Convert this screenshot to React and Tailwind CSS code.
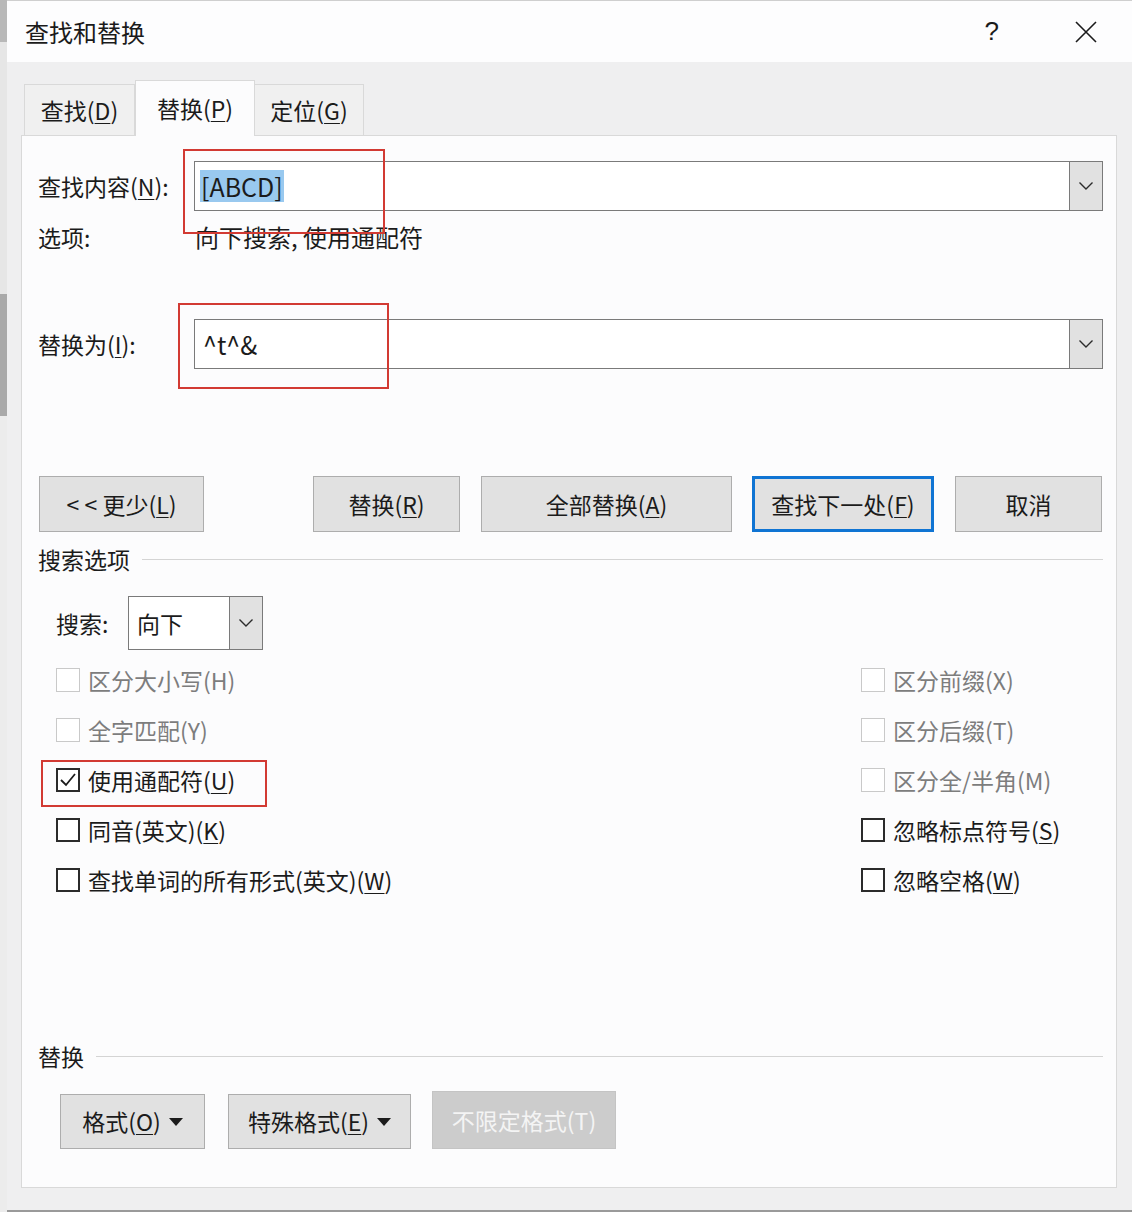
import { useState } from 'react';

function Chevron({ className = '' }) {
    return (
        <svg width="16" height="10" viewBox="0 0 16 10" className={className}>
            <polyline points="1.5,1.5 8,8 14.5,1.5" fill="none" stroke="#2b2b2b" strokeWidth="1.4" />
        </svg>
    );
}

function Caret() {
    return (
        <svg width="14" height="8" viewBox="0 0 14 8" className="ml-[8px]">
            <polygon points="0,0 14,0 7,8" fill="#1b1b1b" />
        </svg>
    );
}

function Key({ children }) {
    return <span className="underline underline-offset-[3px] decoration-1">{children}</span>;
}

function Checkbox({ checked, disabled, label }) {
    return (
        <div className="flex items-center h-[50px]">
            <div
                className={
                    disabled
                        ? 'w-[24px] h-[24px] border border-[#c9c9c9] bg-white'
                        : 'w-[24px] h-[24px] border-2 border-[#2b2b2b] bg-white flex items-center justify-center'
                }
            >
                {checked && (
                    <svg width="18" height="16" viewBox="0 0 18 16">
                        <polyline points="2,8 7,13 16,2" fill="none" stroke="#1b1b1b" strokeWidth="1.8" />
                    </svg>
                )}
            </div>
            <span className={disabled ? 'ml-[8px] text-[#7d7d7d]' : 'ml-[8px] text-[#1b1b1b]'}>{label}</span>
        </div>
    );
}

function Button({ w, children, focused }) {
    return (
        <div
            className={
                focused
                    ? `${w} h-[56px] bg-[#e1e1e1] border-[3px] border-[#0f74d3] flex items-center justify-center`
                    : `${w} h-[56px] bg-[#e1e1e1] border border-[#adadad] flex items-center justify-center`
            }
        >
            {children}
        </div>
    );
}

function ComboField({ value, selected }) {
    return (
        <div className="flex-1 h-[50px] flex border border-[#7a7a7a] bg-white">
            <div className="flex-1 flex items-center pl-[5px] text-[25px]">
                {selected ? (
                    <span className="bg-[#99c9ef] px-[1px] leading-[32px]">{value}</span>
                ) : (
                    <span className="leading-[32px] pl-[3px]">{value}</span>
                )}
            </div>
            <div className="w-[34px] -my-px -mr-px bg-[#e1e1e1] border border-[#7a7a7a] flex items-center justify-center">
                <Chevron />
            </div>
        </div>
    );
}

export default function App() {
    const [tab] = useState('replace');

    return (
        <div className="w-[1132px] h-[1212px] flex bg-[#efeff0] overflow-hidden font-['Noto_Sans_CJK_SC',sans-serif] text-[23px] text-[#1b1b1b]">
            {/* window behind the dialog */}
            <div className="w-[7px] flex flex-col">
                <div className="h-[42px] bg-[#b8b8b8]" />
                <div className="h-[252px] bg-[#e6e6e6]" />
                <div className="h-[122px] bg-[#a9a9a9]" />
                <div className="flex-1 bg-[#ececec]" />
            </div>

            <div className="flex-1 flex flex-col border-b-2 border-[#9a9a9a]">
                {/* title bar */}
                <div className="h-[62px] bg-[#fdfdfe] border-t border-[#cfcfcf] flex items-center pl-[18px]">
                    <span className="text-[24px]">查找和替换</span>
                    <span className="ml-auto mr-[76px] text-[26px] font-['Liberation_Sans',sans-serif]">?</span>
                    <svg width="22" height="22" viewBox="0 0 22 22" className="mr-[35px]">
                        <path d="M1 1 L21 21 M21 1 L1 21" stroke="#1b1b1b" strokeWidth="1.6" />
                    </svg>
                </div>

                {/* tabs */}
                <div className="flex items-end pl-[17px] pt-[18px]">
                    <div className="w-[111px] h-[51px] border border-b-0 border-[#d9d9d9] bg-[#f0f0f0] flex items-center justify-center">
                        查找(<Key>D</Key>)
                    </div>
                    <div className="w-[120px] h-[56px] border border-b-0 border-[#d9d9d9] bg-[#fcfcfd] flex items-center justify-center -mb-px relative z-10">
                        替换(<Key>P</Key>)
                    </div>
                    <div className="w-[109px] h-[51px] border border-b-0 border-l-0 border-[#d9d9d9] bg-[#f0f0f0] flex items-center justify-center">
                        定位(<Key>G</Key>)
                    </div>
                </div>

                {/* panel */}
                <div className="ml-[14px] mr-[15px] h-[1053px] bg-[#fcfcfd] border border-[#d9d9d9] relative flex flex-col pl-[16px] pr-[13px]">
                    <div className="flex items-center mt-[25px]">
                        <div className="w-[156px] shrink-0">
                            查找内容(<Key>N</Key>):
                        </div>
                        <ComboField value="[ABCD]" selected />
                    </div>
                    <div className="flex items-center h-[30px] mt-[11px]">
                        <div className="w-[157px] shrink-0">选项:</div>
                        <div className="text-[24px]">向下搜索,&nbsp;使用通配符</div>
                    </div>
                    <div className="flex items-center mt-[67px]">
                        <div className="w-[156px] shrink-0">
                            替换为(<Key>I</Key>):
                        </div>
                        <ComboField value="^t^&" />
                    </div>

                    {/* action buttons */}
                    <div className="flex mt-[107px] pl-[1px]">
                        <Button w="w-[165px]">
                            &lt;&nbsp;&lt;&nbsp;更少(<Key>L</Key>)
                        </Button>
                        <div className="ml-[109px]">
                            <Button w="w-[147px]">
                                替换(<Key>R</Key>)
                            </Button>
                        </div>
                        <div className="ml-[21px]">
                            <Button w="w-[251px]">
                                全部替换(<Key>A</Key>)
                            </Button>
                        </div>
                        <div className="ml-[20px]">
                            <Button w="w-[182px]" focused>
                                查找下一处(<Key>F</Key>)
                            </Button>
                        </div>
                        <div className="ml-[21px]">
                            <Button w="w-[147px]">取消</Button>
                        </div>
                    </div>

                    {/* search options */}
                    <div className="flex items-center h-[30px] mt-[12px]">
                        <span>搜索选项</span>
                        <div className="flex-1 h-px bg-[#d4d4d4] ml-[12px]" />
                    </div>
                    <div className="flex items-center mt-[22px] pl-[18px]">
                        <span className="w-[72px]">搜索:</span>
                        <div className="w-[135px] h-[54px] flex border border-[#7a7a7a] bg-white">
                            <div className="flex-1 flex items-center pl-[8px]">向下</div>
                            <div className="w-[34px] -my-px -mr-px bg-[#e1e1e1] border border-[#7a7a7a] flex items-center justify-center">
                                <Chevron />
                            </div>
                        </div>
                    </div>

                    <div className="flex mt-[5px] pl-[18px]">
                        <div className="w-[805px] flex flex-col">
                            <Checkbox disabled label="区分大小写(H)" />
                            <Checkbox disabled label="全字匹配(Y)" />
                            <Checkbox checked label={<>使用通配符(<Key>U</Key>)</>} />
                            <Checkbox label={<>同音(英文)(<Key>K</Key>)</>} />
                            <Checkbox label={<>查找单词的所有形式(英文)(<Key>W</Key>)</>} />
                        </div>
                        <div className="flex flex-col">
                            <Checkbox disabled label="区分前缀(X)" />
                            <Checkbox disabled label="区分后缀(T)" />
                            <Checkbox disabled label="区分全/半角(M)" />
                            <Checkbox label={<>忽略标点符号(<Key>S</Key>)</>} />
                            <Checkbox label={<>忽略空格(<Key>W</Key>)</>} />
                        </div>
                    </div>

                    {/* replace formatting */}
                    <div className="flex items-center h-[30px] mt-[136px]">
                        <span>替换</span>
                        <div className="flex-1 h-px bg-[#d4d4d4] ml-[12px]" />
                    </div>
                    <div className="flex items-end mt-[20px] pl-[22px]">
                        <div className="w-[145px] h-[55px] bg-[#e1e1e1] border border-[#adadad] flex items-center justify-center">
                            格式(<Key>O</Key>)<Caret />
                        </div>
                        <div className="ml-[23px] w-[183px] h-[55px] bg-[#e1e1e1] border border-[#adadad] flex items-center justify-center">
                            特殊格式(<Key>E</Key>)<Caret />
                        </div>
                        <div className="ml-[21px] w-[184px] h-[58px] bg-[#cccccc] border border-[#c4c4c4] flex items-center justify-center text-[#f4f4f4]">
                            不限定格式(T)
                        </div>
                    </div>

                    {/* red annotation boxes */}
                    <div className="absolute left-[161px] top-[13px] w-[202px] h-[85px] border-2 border-[#d23a33] pointer-events-none" />
                    <div className="absolute left-[156px] top-[167px] w-[211px] h-[86px] border-2 border-[#d23a33] pointer-events-none" />
                    <div className="absolute left-[19px] top-[624px] w-[226px] h-[47px] border-2 border-[#d23a33] pointer-events-none" />
                </div>
                {tab === 'replace' && <div className="flex-1" />}
            </div>
        </div>
    );
}
